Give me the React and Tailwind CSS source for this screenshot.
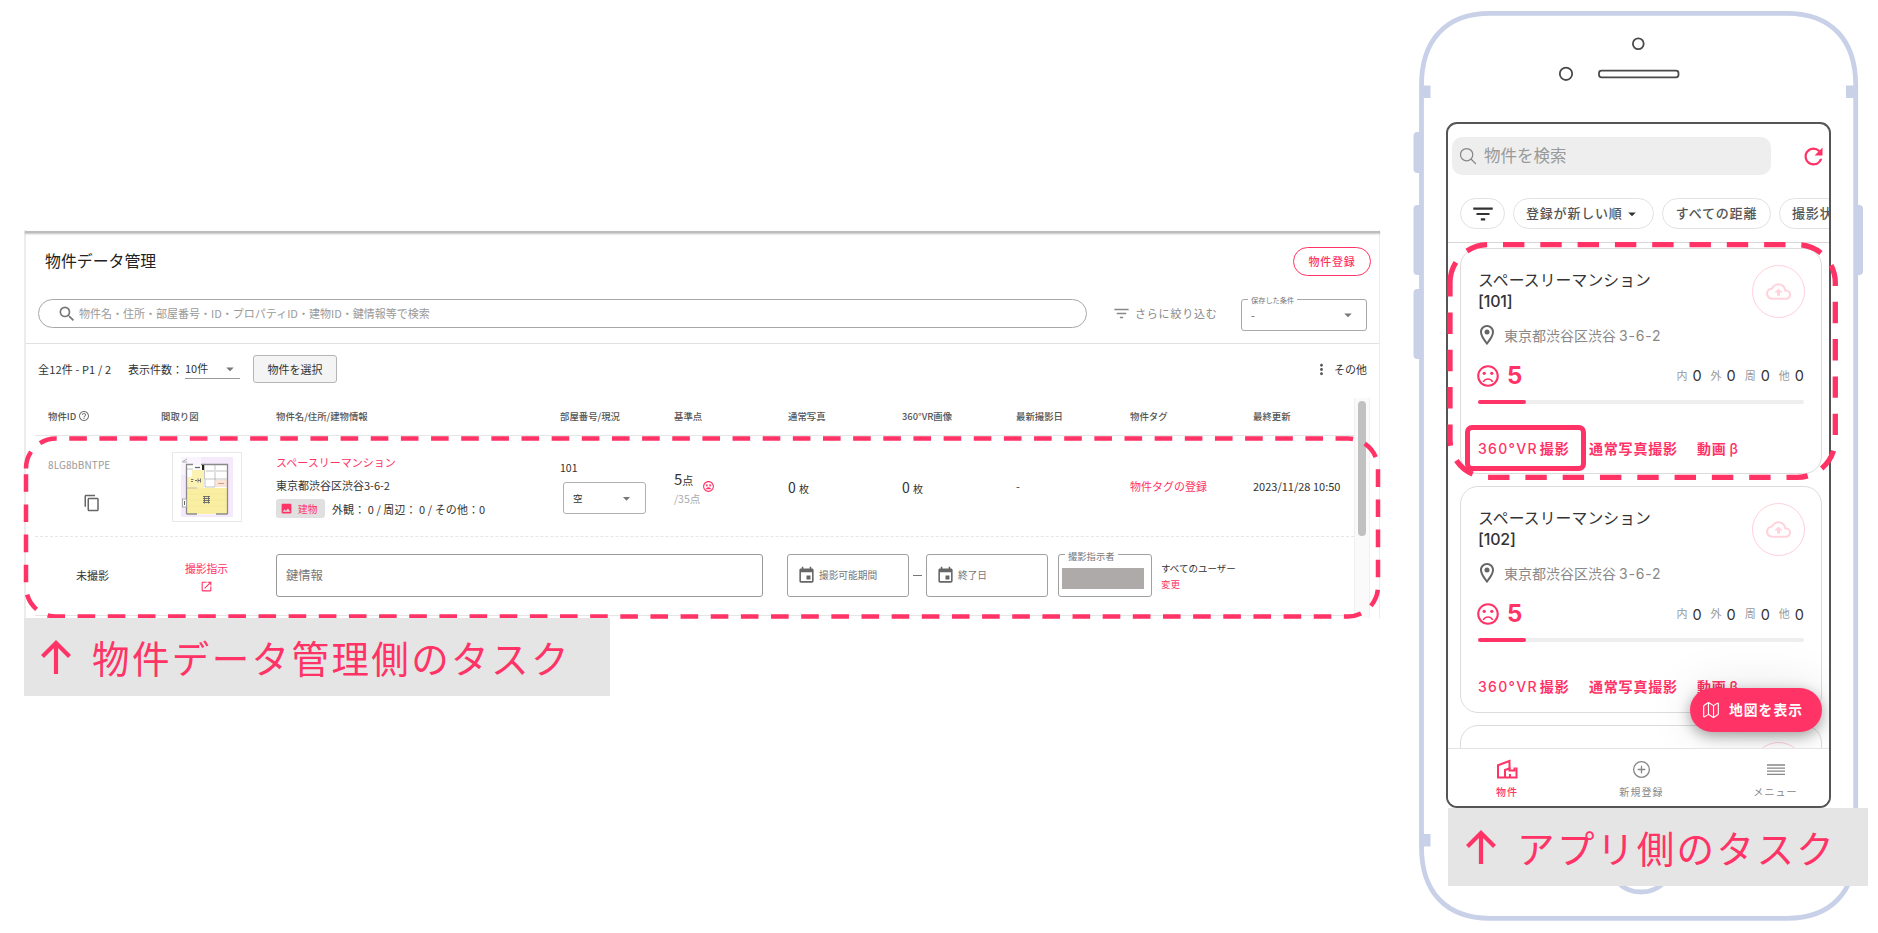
import React from 'react';
import {
  MdSearch,
  MdFilterList,
  MdArrowDropDown,
  MdMoreVert,
  MdHelpOutline,
  MdContentCopy,
  MdImage,
  MdOpenInNew,
  MdRefresh,
  MdOutlineSentimentDissatisfied,
  MdOutlineSentimentVeryDissatisfied,
  MdEvent,
  MdOutlineLocationOn,
  MdOutlineCloudUpload
} from 'react-icons/md';
import { IoSearchOutline, IoAddCircleOutline, IoMapOutline } from 'react-icons/io5';

const counters = [
  { label: '内', value: 0 },
  { label: '外', value: 0 },
  { label: '周', value: 0 },
  { label: '他', value: 0 }
];

const rooms = [
  { id: 1, room: '[101]', score: 5, max: 35 },
  { id: 2, room: '[102]', score: 5, max: 35 }
];

// Small floor plan thumbnail
function FloorPlan() {
  return (
    <svg width="52" height="60" viewBox="0 0 52 60">
      <rect width="52" height="60" fill="#f5e9fc" />
      <path d="M0 0h20v7H8L4 12v6H0z" fill="#fff" opacity="0.5" />
      <path d="M1 5l5-3M2 5h4" stroke="#999" strokeWidth="0.8" />
      <rect x="5.500" y="7.500" width="41" height="50" fill="#fff" />
      <rect x="11" y="13" width="12" height="18" fill="#fbf2b4" />
      <rect x="6" y="20" width="16" height="11" fill="#fbf2b4" />
      <rect x="6" y="31" width="40" height="26" fill="#f9eea2" />
      <path d="M6 37h40M6 43h40M6 49h40" stroke="#f1e390" strokeWidth="0.5" />
      <rect x="35" y="23" width="11" height="7" fill="#fbe3d6" />
      <path d="M37 26.500h6" stroke="#c9a08c" strokeWidth="1" />
      <path d="M5.500 57V7.500H12M20 7.500h26.500V57M5.500 57H16M35 57h11.500" fill="none" stroke="#8a8a8a" strokeWidth="1.300" />
      <path d="M23.500 8v14M34 8v22M24 22h22M24 22v8h10M35 14h11M6 12h6M25 14h8M5.500 31H16" fill="none" stroke="#aaa" strokeWidth="0.700" />
      <path d="M14 10.500h5" stroke="#666" strokeWidth="1.300" />
      <path d="M22 8v5" stroke="#222" strokeWidth="2" />
      <rect x="1.500" y="42" width="4" height="8" fill="#fff" stroke="#999" strokeWidth="0.800" />
      <path d="M3.500 44v4" stroke="#666" strokeWidth="1" />
      <path d="M10 22.500h2.500M10 24.500h2M14 23.500h2M17 21.500v4M19.500 21.500v4M17 23.500h3" stroke="#777" strokeWidth="1" />
      <path d="M22 39.500h7M22 41.500h7M22 43.500h7M22 45.500h7M23.500 39v7.500M27.500 39v7.500" stroke="#666" strokeWidth="0.900" />
    </svg>
  );
}

function UpArrow() {
  return (
    <svg width="32" height="36" viewBox="0 0 32 36" fill="none" stroke="#ff3366" strokeWidth="4.200">
      <path d="M16 35V4M2.500 17.500L16 4l13.500 13.500" />
    </svg>
  );
}

function BuildingIcon() {
  return (
    <svg width="22" height="20" viewBox="0 0 22 20" fill="none" stroke="#ff3366" strokeWidth="2">
      <path d="M2 18.500V6.200L13.500 2v8" />
      <path d="M1 18.500h19.500V8.500" />
      <path d="M9 18V11l4.500-1.500V11.500H19.500" />
      <path d="M14 18.500v-3.500M18.500 8.500v3" />
    </svg>
  );
}

function MenuIcon() {
  return (
    <svg width="18" height="21" viewBox="0 0 18 21" stroke="#888" strokeWidth="1.300">
      <path d="M0 6h18M0 9.100h18M0 12.200h18M0 15.300h18" />
    </svg>
  );
}

function DateField({ label }) {
  return (
    <div className="w-[122px] h-[43px] pl-[9px] flex items-center gap-[3px] border border-[#a0a0a0] rounded-[3px]">
      <MdEvent className="text-[19px] text-[#666]" />
      <span className="text-[9.7px] text-[#777]">{label}</span>
    </div>
  );
}

function TableHeader() {
  return (
    <div className="grid grid-cols-[113px_115px_284px_114px_114px_114px_114px_114px_123px_1fr] items-center h-[38px] pl-[13px] border-b border-[#e6e6e6] text-[9.4px] font-medium text-[#555] whitespace-nowrap">
      <span className="flex items-center gap-[2px]">物件ID <MdHelpOutline className="text-[12px] text-[#777]" /></span>
      <span>間取り図</span>
      <span>物件名/住所/建物情報</span>
      <span>部屋番号/現況</span>
      <span>基準点</span>
      <span>通常写真</span>
      <span>360°VR画像</span>
      <span>最新撮影日</span>
      <span>物件タグ</span>
      <span>最終更新</span>
    </div>
  );
}

function PropertyRow() {
  return (
    <div className="grid grid-cols-[113px_115px_284px_114px_114px_114px_114px_114px_123px_1fr] h-[101px] pl-[13px] border-b border-dashed border-[#e6e6e6] text-[11px] text-[#333] whitespace-nowrap">
      <div className="pt-[23px] leading-[12px]">
        <div className="text-[10px] tracking-[0.1px] text-[#999]">8LG8bBNTPE</div>
        <MdContentCopy className="ml-[35px] mt-[23px] text-[18px] text-[#666]" />
      </div>
      <div className="pl-[11px] pt-[16px]">
        <div className="w-[70px] h-[70px] flex items-center justify-center border border-[#e8e8e8]">
          <FloorPlan />
        </div>
      </div>
      <div className="pt-[20px] leading-[12px]">
        <div className="text-[#ff3366]">スペースリーマンション</div>
        <div className="mt-[11px]">東京都渋谷区渋谷3-6-2</div>
        <div className="mt-[8px] flex items-center">
          <span className="w-[49px] h-[19px] flex items-center pl-[4px] gap-[5px] rounded-[3px] bg-[#e0e0e0] text-[9.7px] text-[#ff3366]">
            <MdImage className="text-[13px]" />建物
          </span>
          <span className="ml-[7px] text-[11px] tracking-[0.070px]">外観： 0 / 周辺： 0 / その他：0</span>
        </div>
      </div>
      <div className="pt-[26px] leading-[12px]">
        <div className="text-[10.500px]">101</div>
        <div className="ml-[3px] mt-[8px] w-[83px] h-[32px] pl-[9px] pr-[10px] flex items-center justify-between border border-[#b0b0b0] rounded-[3px] text-[9.500px]">
          空<MdArrowDropDown className="text-[17px] text-[#777]" />
        </div>
      </div>
      <div className="pt-[34px] flex gap-[2px] items-start">
        <div>
          <div className="leading-[17px] text-[15px]">5<span className="text-[11px]">点</span></div>
          <div className="mt-[3px] leading-[13px] text-[10.500px] text-[#aaa]">/35点</div>
        </div>
        <MdOutlineSentimentVeryDissatisfied className="mt-[10px] text-[13px] text-[#ff3366]" />
      </div>
      <div className="pt-[43px] leading-[16px] text-[14px]">0 <span className="text-[10px]">枚</span></div>
      <div className="pt-[43px] leading-[16px] text-[14px]">0 <span className="text-[10px]">枚</span></div>
      <div className="pt-[44px] leading-[12px]">-</div>
      <div className="pt-[44px] leading-[12px] text-[#ff3366]">物件タグの登録</div>
      <div className="pt-[44px] leading-[12px]">2023/11/28 10:50</div>
    </div>
  );
}

function TaskRow() {
  return (
    <div className="h-[79px] pt-[17px] flex items-start border-b border-[#e6e6e6] text-[11px] text-[#333] whitespace-nowrap">
      <div className="w-[115px] h-[43px] flex items-center justify-center">未撮影</div>
      <div className="w-[113px] pt-[8px] flex flex-col items-center gap-[6px] leading-[12px] text-[10.800px] text-[#ff3366]">
        <span>撮影指示</span>
        <MdOpenInNew className="text-[13px]" />
      </div>
      <div className="ml-[13px] w-[487px] h-[43px] pl-[9px] flex items-center border border-[#999] rounded-[3px] text-[12.300px] text-[#777]">鍵情報</div>
      <div className="ml-[24px] flex items-center">
        <DateField label="撮影可能期間" />
        <span className="mx-[4px] w-[9px] h-px bg-[#777]"></span>
        <DateField label="終了日" />
      </div>
      <div className="relative ml-[10px] w-[94px] h-[43px] pl-[3px] flex items-center border border-[#a0a0a0] rounded-[3px]">
        <span className="absolute left-[6px] top-[-5px] px-[3px] bg-white leading-[12px] text-[9.300px] text-[#777]">撮影指示者</span>
        <div className="mt-[5px] w-[82px] h-[21px] bg-[#aeaaaa]"></div>
      </div>
      <div className="ml-[9px] pt-[8px] text-[9.500px] leading-[12px]">
        <div>すべてのユーザー</div>
        <div className="mt-[4px] text-[#ff3366]">変更</div>
      </div>
    </div>
  );
}

function ManagementPanel() {
  return (
    <div className="relative w-[1356px] h-[388px] pt-px border-l-2 border-r border-[#ececec] bg-white">
      <div className="h-[2px] -mx-px bg-[#bdbdbd] shadow-[0_1px_2px_rgba(0,0,0,0.25)]"></div>

      {/* Title bar */}
      <div className="h-[56px] pl-[19px] pr-[8px] flex items-center justify-between">
        <h1 className="text-[15.900px] text-[#222]">物件データ管理</h1>
        <button className="w-[78px] h-[29px] rounded-full border border-[#ff3366] text-[11px] font-medium tracking-[0.800px] text-[#ff3366]">物件登録</button>
      </div>

      {/* Search and filter */}
      <div className="h-[55px] pt-[10px] pl-[12px] pr-[12px] flex items-start border-b border-[#e2e2e2]">
        <div className="w-[1049px] h-[29px] pl-[18px] flex items-center gap-[2px] rounded-full border border-[#a8a8a8]">
          <MdSearch className="text-[20px] text-[#777]" />
          <span className="text-[11px] text-[#9a9a9a]">物件名・住所・部屋番号・ID・プロパティID・建物ID・鍵情報等で検索</span>
        </div>
        <div className="ml-[25px] h-[29px] flex items-center gap-[4px] text-[#888]">
          <MdFilterList className="text-[19px]" />
          <span className="text-[11px] tracking-[0.800px]">さらに絞り込む</span>
        </div>
        <div className="relative ml-auto w-[126px] h-[32px] pl-[9px] pr-[9px] flex items-center justify-between border border-[#a8a8a8] rounded-[3px] text-[11px] text-[#666]">
          <span className="absolute left-[6px] top-[-5px] px-[3px] bg-white leading-[10px] text-[7.200px] text-[#777]">保存した条件</span>
          -<MdArrowDropDown className="text-[18px] text-[#777]" />
        </div>
      </div>

      {/* Toolbar */}
      <div className="h-[50px] pl-[12px] pr-[12px] flex items-center text-[11px] text-[#333]">
        <span className="w-[90px] tracking-[0.150px]">全12件 - P1 / 2</span>
        <span className="w-[57px]">表示件数：</span>
        <span className="w-[55px] h-[19px] flex items-center justify-between border-b border-[#999]">10件<MdArrowDropDown className="mr-px text-[18px] text-[#777]" /></span>
        <button className="ml-[13px] w-[84px] h-[28px] rounded-[3px] border border-[#b5b5b5] bg-[#f4f4f4] text-[11px]">物件を選択</button>
        <MdMoreVert className="ml-auto text-[17px] text-[#555]" />
        <span className="ml-[4px]">その他</span>
      </div>

      {/* Table with its scroll bar */}
      <div className="mt-[4px] ml-[9px] flex">
        <div className="w-[1319px]">
          <TableHeader />
          <PropertyRow />
          <TaskRow />
        </div>
        <div className="w-[16px] h-[220px] pt-[3px] flex justify-center bg-[#fafafa] border-x border-[#f0f0f0]">
          <div className="w-[8px] h-[135px] rounded-full bg-[#c1c1c1]"></div>
        </div>
      </div>

      <svg className="absolute left-[-6px] top-[200px]" width="1368" height="196" viewBox="20 430 1368 196" fill="none">
        <path
          d="M26 468.500A30 30 0 0 1 56 438.500H1348A30 30 0 0 1 1378 468.500V586.500A30 30 0 0 1 1348 616.500H56A30 30 0 0 1 26 586.500Z"
          stroke="#ff3366" strokeWidth="4.500" strokeDasharray="17.600 12.550"
        />
      </svg>
    </div>
  );
}

function UploadBadge() {
  return (
    <div className="-mt-[6px] -mr-px w-[53px] h-[53px] flex shrink-0 items-center justify-center rounded-full border border-[#ffd0da]">
      <MdOutlineCloudUpload className="text-[25px] text-[#ffd3dc]" />
    </div>
  );
}

function RoomCard({ item }) {
  return (
    <div className="ml-[12px] mr-[7px] h-[226.4px] mb-[12px] px-[17px] pt-[22px] shrink-0 rounded-[18px] border border-[#dcdcdc]">
      <div className="flex justify-between">
        <div className="text-[#333]">
          <div className="leading-[20px] text-[15.800px] tracking-[0.100px]">スペースリーマンション</div>
          <div className="leading-[20px] text-[16px] font-medium tracking-[-0.200px]">{item.room}</div>
        </div>
        <UploadBadge />
      </div>
      <div className="mt-[5px] ml-[-3px] h-[24px] flex items-center text-[#888]">
        <MdOutlineLocationOn className="text-[24px] text-[#666]" />
        <span className="ml-[5px] text-[14px]">東京都渋谷区渋谷<span className="ml-[3px] tracking-[0.800px]">3-6-2</span></span>
      </div>
      <div className="mt-[16px] h-[26px] flex items-center">
        <MdOutlineSentimentDissatisfied className="-ml-[3px] text-[26px] text-[#ff3366]" />
        <span className="ml-[6px] text-[24px] font-bold text-[#ff3366]">{item.score}</span>
        <div className="ml-auto flex gap-[9px]">
          {counters.map(c => (
            <span key={c.label} className="flex items-center gap-[5px] text-[11px] text-[#999]">
              {c.label}<span className="text-[14.500px] text-[#333]">{c.value}</span>
            </span>
          ))}
        </div>
      </div>
      <div className="mt-[11px] h-[4px] rounded-full bg-[#eeeeee]">
        <div className="h-full rounded-full bg-[#ff3366]" style={{ width: `${(item.score / item.max) * 102}%` }}></div>
      </div>
      <div className="mt-[34px] h-[20px] flex items-center text-[14px] font-bold text-[#ff3366] whitespace-nowrap">
        <span className="w-[111px] font-medium tracking-[1.300px]">360°VR<span className="ml-[2px] font-bold tracking-[0.800px]">撮影</span></span>
        <span className="w-[108px] tracking-[0.800px]">通常写真撮影</span>
        <span className="tracking-[0.800px]">動画<span className="ml-[3px] font-medium">β</span></span>
      </div>
    </div>
  );
}

function PhoneFrame() {
  return (
    <svg className="absolute left-0 top-0" width="478" height="933" viewBox="1400 0 478 933" fill="none">
      <g fill="#c9d1e8">
        <rect x="1413.500" y="132" width="9" height="41" rx="4" />
        <rect x="1413.500" y="205" width="9" height="70" rx="4" />
        <rect x="1413.500" y="289" width="9" height="70" rx="4" />
        <rect x="1854" y="205" width="9" height="70" rx="4" />
      </g>
      <path
        d="M1421.500 85C1421.500 40 1446 13.300 1490 13.300H1787C1831 13.300 1855.700 40 1855.700 85V847C1855.700 892 1831 918.300 1787 918.300H1490C1446 918.300 1421.500 892 1421.500 847Z"
        fill="#fff" stroke="#c9d1e8" strokeWidth="4.800"
      />
      <path d="M1423 85.500h7.500v12.500h-7.500zM1846 85.500h8v12.500h-8zM1423 834h7.500v12.500h-7.500z" fill="#c9d1e8" />
      <circle cx="1641" cy="859" r="33" stroke="#c9d1e8" strokeWidth="4.800" />
      <g stroke="#4a4a4a" strokeWidth="1.800">
        <circle cx="1638.300" cy="43.700" r="5.400" />
        <circle cx="1566" cy="73.800" r="6.200" />
        <rect x="1599" y="70.700" width="79.500" height="6.600" rx="2.500" />
      </g>
    </svg>
  );
}

function PhoneScreen() {
  return (
    <div className="relative w-[385px] h-[686px] flex flex-col rounded-[11px] border-2 border-[#555] bg-white overflow-hidden font-[family-name:'Inter','Noto_Sans_CJK_JP',sans-serif] whitespace-nowrap">
      {/* Search */}
      <div className="mt-[13px] ml-[4px] mr-[2px] h-[38px] flex items-center justify-between shrink-0">
        <div className="w-[319px] h-full pl-[6px] flex items-center gap-[6px] rounded-[10px] bg-[#eeeeee] text-[#999]">
          <IoSearchOutline className="text-[20px] text-[#888]" />
          <span className="text-[16.500px]">物件を検索</span>
        </div>
        <MdRefresh className="text-[27px] text-[#ff3366]" />
      </div>

      {/* Filter chips */}
      <div className="mt-[23px] pl-[12px] h-[31px] flex gap-[8px] shrink-0 text-[13px] font-medium tracking-[0.800px] text-[#555]">
        <div className="w-[45px] shrink-0 flex items-center justify-center rounded-full border border-[#e2e2e2]">
          <MdFilterList className="text-[26px] text-[#333]" />
        </div>
        <div className="w-[141px] shrink-0 pl-[12px] flex items-center rounded-full border border-[#e2e2e2]">
          登録が新しい順<MdArrowDropDown className="text-[18px] text-[#333]" />
        </div>
        <div className="w-[109px] shrink-0 flex items-center justify-center rounded-full border border-[#e2e2e2]">すべての距離</div>
        <div className="w-[109px] shrink-0 pl-[12px] flex items-center rounded-full border border-[#e2e2e2]">撮影状況</div>
      </div>

      {/* Property cards */}
      <div className="mt-[13px] pt-[5px] flex-1 min-h-0 flex flex-col overflow-hidden border-t border-[#d8d8d8]">
        {rooms.map(item => (
          <RoomCard key={item.id} item={item} />
        ))}
        {/* Top edge of the next card */}
        <div className="ml-[12px] mr-[7px] h-[226.4px] px-[17px] pt-[22px] shrink-0 flex justify-end items-start rounded-[18px] border border-[#dcdcdc]">
          <UploadBadge />
        </div>
      </div>

      <button className="absolute right-[7px] bottom-[74px] w-[132px] h-[44px] pl-[12px] flex items-center rounded-full bg-[#ff3366] text-white shadow-[0_4px_14px_rgba(0,0,0,0.35),0_0_50px_rgba(0,0,0,0.1)]">
        <IoMapOutline className="text-[18px]" />
        <span className="ml-[9px] text-[13.800px] font-bold tracking-[1px]">地図を表示</span>
      </button>

      {/* Bottom navigation */}
      <div className="relative h-[58px] shrink-0 flex bg-white border-t border-[#e4e4e4] text-[10px] tracking-[1.100px] text-[#888]">
        <div className="w-[118px] shrink-0 pt-[10px] flex flex-col items-center text-[#ff3366]">
          <BuildingIcon />
          <span className="mt-[6px] leading-[14px] font-medium">物件</span>
        </div>
        <div className="w-[151px] shrink-0 pt-[10px] flex flex-col items-center">
          <IoAddCircleOutline className="text-[21px]" />
          <span className="mt-[5px] leading-[14px]">新規登録</span>
        </div>
        <div className="w-[117px] shrink-0 pt-[10px] flex flex-col items-center">
          <MenuIcon />
          <span className="mt-[5px] leading-[14px]">メニュー</span>
        </div>
      </div>
    </div>
  );
}

function App() {
  return (
    <div className="w-[1878px] h-[933px] flex overflow-hidden bg-white font-[family-name:'Noto_Sans_CJK_JP',sans-serif]">
      <div className="w-[1400px] shrink-0 pl-[24px] pt-[230px]">
        <ManagementPanel />
        <div className="relative w-[586px] h-[78px] pl-[16px] flex items-center bg-[#e5e5e5] text-[#ff3366]">
          <UpArrow />
          <span className="ml-[20px] text-[37.500px] tracking-[2.400px] whitespace-nowrap">物件データ管理側のタスク</span>
        </div>
      </div>

      <div className="relative w-[478px] shrink-0 pt-[122px]">
        <PhoneFrame />
        <div className="ml-[46px]">
          <PhoneScreen />
        </div>
        <div className="relative ml-[48px] w-[420px] h-[78px] pl-[17px] flex items-center bg-[#e5e5e5] text-[#ff3366]">
          <UpArrow />
          <span className="ml-[20px] text-[37.500px] tracking-[2.400px] whitespace-nowrap">アプリ側のタスク</span>
        </div>

        {/* Highlights over the first card */}
        <svg className="absolute left-[40px] top-[236px]" width="404" height="250" viewBox="1440 236 404 250" fill="none">
          <path
            d="M1450 282.700A38 38 0 0 1 1488 244.700H1797.300A38 38 0 0 1 1835.300 282.700V439.300A38 38 0 0 1 1797.300 477.300H1488A38 38 0 0 1 1450 439.300Z"
            stroke="#ff3366" strokeWidth="5.300" strokeDasharray="21.400 15.900"
          />
        </svg>
        <div className="absolute left-[65px] top-[425px] w-[121px] h-[46px] rounded-[7px] border-[5px] border-[#ff3366]"></div>
      </div>
    </div>
  );
}

export default App;
